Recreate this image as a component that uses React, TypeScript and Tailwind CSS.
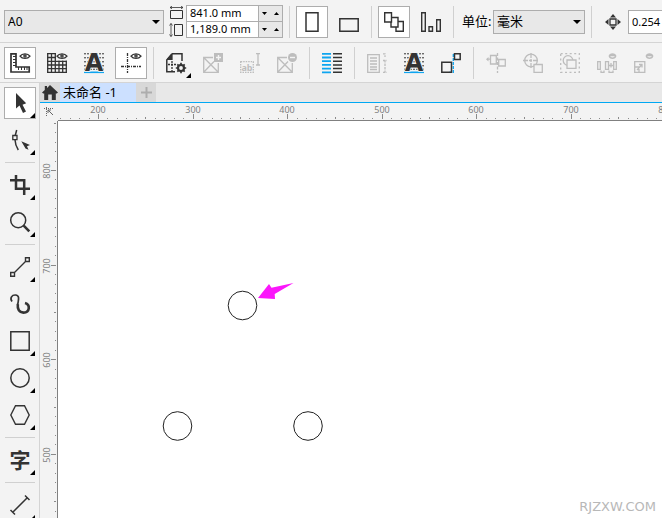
import type { ReactNode } from "react";

const INK = "#333333";
const MUTED = "#bdbdbd";
const BLUE = "#0ea5f0";

function Icon({ children, color = INK, size = 20 }: { children: ReactNode; color?: string; size?: number }) {
  return (
    <svg width={size} height={size} viewBox={`0 0 ${size} ${size}`} fill="none" stroke={color} strokeWidth="1.3" className="shrink-0 overflow-visible">
      {children}
    </svg>
  );
}

function Eye() {
  return (
    <>
      <path d="M10 3.2C12.3.2 17.7.2 20 3.2C17.7 6.2 12.3 6.2 10 3.2Z" />
      <circle cx="15" cy="3" r="1.1" />
    </>
  );
}

function TextFrame() {
  return (
    <Icon>
      <path d="M0 .8H20M0 4.8H20M0 8.8H20M0 12.8H20M0 16.2H20" strokeDasharray="2 1" strokeWidth="1" />
      <path d="M0 19.3H20" stroke={BLUE} strokeWidth="1.6" />
      <text x="10" y="18" textAnchor="middle" fontSize="24" fontWeight="700" fontFamily="DejaVu Sans, sans-serif" fill={INK} stroke="#f3f3f3" strokeWidth="1.5" paintOrder="stroke">A</text>
    </Icon>
  );
}

function CrossedBox({ sign }: { sign: "plus" | "minus" }) {
  return (
    <Icon color={MUTED}>
      <path d="M10 4.5H.7V19.3H15.3V10M.7 4.5L15.3 19.3M11 8.5L.7 19.3" />
      {sign === "plus" ? <path d="M11 0H20V9H11Z" fill={MUTED} stroke="none" /> : <circle cx="15.5" cy="4.5" r="4.5" fill={MUTED} stroke="none" />}
      <path d={sign === "plus" ? "M13 4.5H18M15.5 2V7" : "M13 4.5H18"} stroke="#f3f3f3" strokeWidth="1.4" />
    </Icon>
  );
}

type Tool = { label: string; icon: ReactNode; active?: boolean; flyout?: boolean; disabled?: boolean };

const orientationTools: Tool[] = [
  { label: "纵向", active: true, icon: <Icon><path d="M4 .8H16V19.2H4Z" strokeWidth="1.5" /></Icon> },
  { label: "横向", icon: <Icon><path d="M.8 6.7H19.2V19.2H.8Z" strokeWidth="1.5" /></Icon> },
];

const pageTools: Tool[] = [
  {
    label: "所有页面",
    active: true,
    icon: (
      <Icon>
        <path d="M.7.7H7.5V10H.7ZM8 5.5H14V15H7V10M14 9.5H19.3V19.3H12V15" strokeWidth="1.4" />
      </Icon>
    ),
  },
  {
    label: "当前页面",
    icon: (
      <Icon>
        <path d="M.7.7H4.3V19.3H.7ZM8 14.7H11.5V19.3H8ZM15.7 7.7H19.3V19.3H15.7Z" strokeWidth="1.4" />
      </Icon>
    ),
  },
];

const viewTools: Tool[] = [
  {
    label: "标尺",
    active: true,
    icon: (
      <Icon>
        <path d="M1 .8H6V14H19.2V19H1Z" strokeWidth="1.7" />
        <path d="M3 3.5H6M3 6.5H6M3 9.5H6M3 12.5H6M8.5 14V17M11.5 14V17M14.5 14V17M17 14V17" strokeWidth="1" />
        <Eye />
      </Icon>
    ),
  },
  {
    label: "网格",
    icon: (
      <Icon>
        <path d="M.7 0V20M4.5 0V20M8.3 0V20M12 7.5V20M15.7 7.5V20M19.3 7.5V20M0 .7H9M0 4.5H9M0 8.3H20M0 12H20M0 15.7H20M0 19.3H20" />
        <Eye />
      </Icon>
    ),
  },
  { label: "文本框", icon: <TextFrame /> },
  {
    label: "辅助线",
    active: true,
    icon: (
      <Icon>
        <path d="M6.5 0V20M0 13.5H20" strokeDasharray="3 1 1 1" />
        <Eye />
      </Icon>
    ),
  },
];

const layoutTools: Tool[] = [
  {
    label: "页面设置",
    flyout: true,
    icon: (
      <Icon>
        <path d="M.8 7V18.8H9M6 .8H16V8M.8 7L6 .8" strokeWidth="1.5" />
        <path d="M0 7L6.6 0V7Z" fill={INK} stroke="none" />
        <path d="M6 8V19M2 11.5H11" strokeDasharray="2 1" />
        <circle cx="15" cy="15" r="3" strokeWidth="2.2" />
        <path d="M15 9.8V12M15 18V20.2M9.8 15H12M18 15H20.2M11.3 11.3L13 13M17 17L18.7 18.7M18.7 11.3L17 13M13 17L11.3 18.7" strokeWidth="1.7" />
      </Icon>
    ),
  },
  { label: "添加图框", disabled: true, icon: <CrossedBox sign="plus" /> },
  {
    label: "文本编辑",
    disabled: true,
    icon: (
      <Icon color={MUTED}>
        <path d="M.7 8.7H13.3V19.3H.7Z" strokeDasharray="1.5 1" />
        <text x="7" y="17.5" textAnchor="middle" fontSize="9" fontWeight="700" fontFamily="Noto Sans, sans-serif" fill={MUTED} stroke="none">ab</text>
        <path d="M16 .7H20M18 .7V12M16 12H20" />
      </Icon>
    ),
  },
  { label: "移除图框", disabled: true, icon: <CrossedBox sign="minus" /> },
];

const columnTools: Tool[] = [
  {
    label: "栏",
    icon: (
      <Icon>
        <path d="M0 .8H9M0 4.5H9M0 8.2H9M0 11.9H9M0 15.6H9M0 19.3H9" stroke={BLUE} strokeWidth="1.8" />
        <path d="M11 .8H20M11 4.5H20M11 8.2H20M11 11.9H20M11 15.6H20M11 19.3H20" strokeWidth="1.5" />
      </Icon>
    ),
  },
];

const snapTools: Tool[] = [
  {
    label: "段落",
    disabled: true,
    icon: (
      <Icon color={MUTED}>
        <path d="M.7 1.7H12.3V19.3H.7ZM3 5H10M3 8H10M3 11H10M3 14H10M3 16.5H10" />
        <path d="M16 .8H18V4M18 7V19M16 19.3H20M16 7.5H20" strokeDasharray="2.5 1" />
      </Icon>
    ),
  },
  { label: "基线对齐", icon: <TextFrame /> },
  {
    label: "贴齐",
    icon: (
      <Icon>
        <path d="M12.3 1V20M8 19.3H12" stroke={BLUE} strokeDasharray="3 1" />
        <path d="M.8 9.2H10.5V19.2H.8ZM13.5.8H19.2V6.5H13.5Z" strokeWidth="1.5" />
      </Icon>
    ),
  },
];

const alignTools: Tool[] = [
  {
    label: "对齐",
    disabled: true,
    icon: (
      <Icon color={MUTED}>
        <path d="M0 6.2L2.5 4V8.5Z" fill={MUTED} stroke="none" />
        <path d="M4.5 2.5H10.3V11H4.5ZM12.7 6.5H19.3V13H12.7ZM2 6.2H4.5" />
        <path d="M11.5 0V20" strokeDasharray="3 1.5" />
      </Icon>
    ),
  },
  {
    label: "中心",
    disabled: true,
    icon: (
      <Icon color={MUTED}>
        <circle cx="8" cy="7.5" r="6.3" />
        <path d="M0 7.5H16M8 0V15" strokeDasharray="5 1 3 1" />
        <path d="M11 11.5H19.3V19.3H11Z" fill="#f3f3f3" />
      </Icon>
    ),
  },
  {
    label: "组合",
    disabled: true,
    icon: (
      <Icon color={MUTED}>
        <path d="M.7.7H19.3V19.3H.7Z" strokeDasharray="2 2.5" />
        <circle cx="8" cy="7.5" r="4.8" />
        <path d="M7 7H16V15.3H7Z" fill="#f3f3f3" />
      </Icon>
    ),
  },
  {
    label: "分布",
    disabled: true,
    icon: (
      <Icon color={MUTED}>
        <path d="M.7 8.7H3.3V16.3H.7ZM8.5 8.7H11.5V16.3H8.5ZM16.7 8.7H19.3V16.3H16.7Z" />
        <path d="M4 17.5V19.3H7V17.5M12 17.5V19.3H16V17.5M12 12.5H16M14 10V14.5" />
        <path d="M12.3 3C13 .3 18 .3 18.7 3C18 6 13 6 12.3 3ZM12.3 2.5H18.7" />
      </Icon>
    ),
  },
  {
    label: "缩放",
    disabled: true,
    icon: (
      <Icon color={MUTED}>
        <path d="M.7 8.7H10.8V19.3H.7ZM3 17L8 11.5M5 11.5H8V14.5M.7 14H5V19" />
        <path d="M12.3 3C13 .3 18 .3 18.7 3C18 6 13 6 12.3 3ZM12.3 2.5H18.7" />
      </Icon>
    ),
  },
];

const toolbox: Tool[][] = [
  [
    {
      label: "选择",
      active: true,
      flyout: true,
      icon: <Icon><path d="M6 0V15.5L9.5 12.5L13 20L16 18.5L12.5 11.7L16.2 10.3Z" fill={INK} stroke="none" /></Icon>,
    },
    {
      label: "形状",
      flyout: true,
      icon: (
        <Icon>
          <path d="M6.7 0L5.3 5.3M5 9.8C5.2 14 6.2 17 8.3 20" strokeWidth="1.5" />
          <path d="M2.8 5.5H7V9.7H2.8Z" />
          <path d="M11.3 11.2L20 15L17 16.3L18.5 19.7L15.5 18.6Z" fill={INK} stroke="none" />
        </Icon>
      ),
    },
  ],
  [
    { label: "裁剪", flyout: true, icon: <Icon><path d="M0 5.2H14.2V20M6 0V13.8H20" strokeWidth="2.5" /></Icon> },
    {
      label: "缩放",
      flyout: true,
      icon: (
        <Icon>
          <circle cx="8.2" cy="8.2" r="7.5" strokeWidth="1.5" />
          <path d="M13.7 13.7L19.3 19.3" strokeWidth="2.6" />
        </Icon>
      ),
    },
  ],
  [
    {
      label: "手绘",
      flyout: true,
      icon: (
        <Icon>
          <path d="M.7 15.5H4.5V19.3H.7ZM15.5.7H19.3V4.5H15.5ZM4.5 15.5L15.5 4.5" strokeWidth="1.4" />
        </Icon>
      ),
    },
    {
      label: "艺术笔",
      icon: (
        <Icon>
          <path d="M2 7.5C-.5 4 2 .8 5.5 1C10.5 1.5 8 7 7.8 10.5" strokeWidth="1.7" />
          <path d="M7.8 10C7.3 15 9 18.6 13.5 18.6C20 18.6 20.5 10.5 15 9" strokeWidth="2.6" />
        </Icon>
      ),
    },
    { label: "矩形", flyout: true, icon: <Icon><path d="M.8.8H19.2V19.2H.8Z" strokeWidth="1.5" /></Icon> },
    { label: "椭圆形", flyout: true, icon: <Icon><circle cx="10" cy="10" r="9.2" strokeWidth="1.5" /></Icon> },
    { label: "多边形", flyout: true, icon: <Icon><path d="M.8 10L5.5.8H14.5L19.2 10L14.5 19.2H5.5Z" strokeWidth="1.4" /></Icon> },
  ],
  [
    {
      label: "文本",
      flyout: true,
      icon: (
        <Icon>
          <text x="10" y="18" textAnchor="middle" fontSize="21" fontWeight="700" fontFamily="Noto Sans CJK SC, sans-serif" fill={INK} stroke="none">字</text>
        </Icon>
      ),
    },
  ],
  [{ label: "平行度量", flyout: true, icon: <Icon><path d="M2.5 17.5L17.5 2.5M.5 15L5 19.5M15 .5L19.5 5" strokeWidth="1.5" /></Icon> }],
];

function ToolButton({ tool }: { tool: Tool }) {
  return (
    <button
      type="button"
      aria-label={tool.label}
      title={tool.label}
      disabled={tool.disabled}
      className={`relative flex size-8 shrink-0 items-center justify-center border ${
        tool.active ? "border-[#adadad] bg-white" : "border-transparent"
      }`}
    >
      {tool.icon}
      {tool.flyout && (
        <svg width="5" height="5" viewBox="0 0 5 5" className="absolute right-0 bottom-0">
          <path d="M5 0V5H0Z" fill="#000" />
        </svg>
      )}
    </button>
  );
}

function ToolGroup({ tools }: { tools: Tool[] }) {
  return tools.map((t) => <ToolButton key={t.label} tool={t} />);
}

function Separator() {
  return <div className="mx-px h-8 w-px shrink-0 bg-[#d0d0d0]" />;
}

function Dropdown({ label, options, className }: { label: string; options: string[]; className: string }) {
  return (
    <div className={`relative h-6 shrink-0 ${className}`}>
      <select aria-label={label} className="h-full w-full appearance-none border border-[#adadad] bg-[#e8e8e8] px-[3px] text-black">
        {options.map((o) => (
          <option key={o}>{o}</option>
        ))}
      </select>
      <svg width="8" height="4" viewBox="0 0 8 4" className="pointer-events-none absolute top-[10px] right-1">
        <path d="M0 0H8L4 4Z" fill="#000" />
      </svg>
    </div>
  );
}

function SizeField({ label, value }: { label: string; value: string }) {
  return (
    <div className="flex items-stretch">
      <input aria-label={label} defaultValue={value} className="h-[15px] w-[71px] bg-white px-[3px] text-[11px] outline-none" />
      <div className="flex w-6 border-l border-[#adadad] bg-[#e8e8e8]">
        <button type="button" aria-label={`${label} 减少`} className="flex flex-1 items-center justify-center">
          <svg width="5" height="3" viewBox="0 0 5 3"><path d="M0 0H5L2.5 3Z" fill="#000" /></svg>
        </button>
        <button type="button" aria-label={`${label} 增加`} className="flex flex-1 items-center justify-center">
          <svg width="5" height="3" viewBox="0 0 5 3"><path d="M0 3H5L2.5 0Z" fill="#000" /></svg>
        </button>
      </div>
    </div>
  );
}

function PropertyBar() {
  return (
    <div className="flex items-center gap-[5px] overflow-hidden border-b border-[#d4d4d4] pt-[5px] pb-1 pl-1">
      <Dropdown label="页面大小" options={["A0", "A1", "A2"]} className="w-40" />
      <div className="flex shrink-0 items-center gap-[2px]">
        <div className="flex flex-col items-center gap-[3px]">
          <svg width="15" height="14" viewBox="0 0 15 14" fill="none" stroke={INK}>
            <path d="M1.5 4.5H13.5V12.5H1.5Z" />
            <path d="M1 1.5H14M3 .2L1 1.5L3 2.8M12 .2L14 1.5L12 2.8" strokeWidth=".8" />
          </svg>
          <svg width="15" height="14" viewBox="0 0 15 14" fill="none" stroke={INK}>
            <path d="M5.5 1.5H13.5V12.5H5.5Z" />
            <path d="M2 .5V13.5M.5 2.5L2 .5L3.5 2.5M.5 11.5L2 13.5L3.5 11.5" strokeWidth=".8" />
          </svg>
        </div>
        <div className="divide-y divide-[#adadad] border border-[#adadad]">
          <SizeField label="页面宽度" value="841.0 mm" />
          <SizeField label="页面高度" value="1,189.0 mm" />
        </div>
      </div>
      <Separator />
      <ToolGroup tools={orientationTools} />
      <Separator />
      <ToolGroup tools={pageTools} />
      <Separator />
      <div className="flex shrink-0 items-center gap-[3px] pl-[2px] text-[13px]">
        <span className="w-7 whitespace-nowrap">单位:</span>
        <Dropdown label="单位" options={["毫米", "厘米", "英寸"]} className="w-[92px]" />
      </div>
      <Separator />
      <label className="flex min-w-0 flex-1 items-center gap-[7px] pl-[7px]">
        <Icon size={16}>
          <path d="M5 5H11V11H5Z" />
          <path d="M8 0L11 3.5H5ZM8 16L11 12.5H5ZM0 8L3.5 5V11ZM16 8L12.5 5V11Z" fill={INK} stroke="none" />
        </Icon>
        <input aria-label="微调距离" defaultValue="0.254" className="h-6 min-w-0 flex-1 border border-r-0 border-[#adadad] bg-white pl-[3px] text-[11px] outline-none" />
      </label>
    </div>
  );
}

function StandardBar() {
  return (
    <div className="flex items-center gap-[5px] overflow-hidden border-b border-[#d4d4d4] pt-1 pb-[3px] pl-1">
      <ToolGroup tools={viewTools} />
      <Separator />
      <ToolGroup tools={layoutTools} />
      <Separator />
      <ToolGroup tools={columnTools} />
      <Separator />
      <ToolGroup tools={snapTools} />
      <Separator />
      <ToolGroup tools={alignTools} />
    </div>
  );
}

function Toolbox() {
  return (
    <aside className="flex w-10 shrink-0 flex-col gap-[5px] overflow-hidden border-r border-[#d4d4d4] pt-1 pl-1">
      {toolbox.map((group, i) => (
        <div key={i} className="flex shrink-0 flex-col gap-[5px]">
          {i > 0 && <div className="my-px ml-px h-px w-[30px] bg-[#d0d0d0]" />}
          <ToolGroup tools={group} />
        </div>
      ))}
    </aside>
  );
}

function Tabs() {
  return (
    <nav className="flex h-5 border-b border-[#00a8f3] bg-[#e8e8e8]">
      <button type="button" aria-label="主页" className="flex w-5 items-center justify-center bg-[#dadada]">
        <svg width="16" height="15" viewBox="0 0 16 15">
          <path d="M8 0L16 7.5L14.8 8.5H13.8V15H9.8V9.5H6.2V15H2.2V8.5H1.2L0 7.5L2.8 5V1H5V3Z" fill={INK} />
        </svg>
      </button>
      <button type="button" className="w-[76px] bg-[#cce0ff] pl-[3px] text-left text-[13px] leading-[19px] whitespace-nowrap text-black">
        未命名 -1
      </button>
      <button type="button" aria-label="新建" className="flex w-5 items-center justify-center bg-[#d8d8d8]">
        <svg width="11" height="11" viewBox="0 0 11 11"><path d="M5.5 0V11M0 5.5H11" stroke="#adadad" strokeWidth="2" /></svg>
      </button>
    </nav>
  );
}

const STEP = 9.46;

// offset is the place of the first label along the ruler
function ticks(offset: number, first: number, dir: 1 | -1, count: number) {
  return Array.from({ length: count }, (_, i) => i - 5)
    .map((n) => ({ pos: Math.round(offset + n * STEP), major: n % 10 === 0, mid: n % 5 === 0, value: first + dir * n * 10 }))
    .filter((t) => t.pos > 0);
}

function HorizontalRuler() {
  return (
    <svg className="h-[18px] min-w-0 flex-1 border-b border-[#808080]" stroke="#8a8a8a" shapeRendering="crispEdges">
      {ticks(40, 200, 1, 66).map((t) => (
        <g key={t.value}>
          <path d={`M${t.pos + 0.5} ${t.major ? 11 : t.mid ? 14 : 15}V16`} />
          {t.major && (
            <text x={t.pos} y="10" textAnchor="middle" fontSize="9" fill="#808080" stroke="none">{t.value}</text>
          )}
        </g>
      ))}
    </svg>
  );
}

function VerticalRuler() {
  return (
    <svg className="h-full w-[18px] shrink-0 border-r border-[#808080]" stroke="#8a8a8a" shapeRendering="crispEdges">
      {ticks(50, 800, -1, 42).map((t) => (
        <g key={t.value}>
          <path d={`M${t.major ? 11 : t.mid ? 14 : 15} ${t.pos - 0.5}H16`} />
          {t.major && (
            <text x="0" y="0" transform={`translate(10 ${t.pos}) rotate(-90)`} textAnchor="middle" fontSize="9" fill="#808080" stroke="none">{t.value}</text>
          )}
        </g>
      ))}
    </svg>
  );
}

function Canvas() {
  return (
    <div className="relative min-w-0 flex-1 bg-white">
      <svg className="h-full w-full" fill="none" stroke="#222">
        <circle cx="184.5" cy="184.5" r="14.3" />
        <circle cx="119.5" cy="305" r="14.3" />
        <circle cx="250" cy="305" r="14.3" />
        <path d="M200 177L211 163L213.5 166.7L235.5 162L216.7 173L217 178Z" fill="#fb16fb" stroke="none" />
      </svg>
      <span className="absolute right-[6px] bottom-px font-['DejaVu_Sans',sans-serif] text-[13px] leading-5 text-[#b8b8b8]">RJZXW.COM</span>
    </div>
  );
}

export default function App() {
  return (
    <div className="flex h-screen flex-col overflow-hidden bg-[#f3f3f3] font-['Noto_Sans','Noto_Sans_CJK_SC',sans-serif] text-[12px] text-black">
      <PropertyBar />
      <StandardBar />
      <div className="flex min-h-0 flex-1">
        <Toolbox />
        <main className="flex min-w-0 flex-1 flex-col">
          <Tabs />
          <div className="flex">
            <div className="flex size-[18px] shrink-0 items-center justify-center">
              <svg width="10" height="10" viewBox="0 0 10 10" fill="none" stroke="#666">
                <path d="M2.5 0V10M0 1.5H10" strokeDasharray="1 1" />
                <path d="M4 3L9 8M4 6V3H7" />
              </svg>
            </div>
            <HorizontalRuler />
          </div>
          <div className="flex min-h-0 flex-1">
            <VerticalRuler />
            <Canvas />
          </div>
        </main>
      </div>
    </div>
  );
}
